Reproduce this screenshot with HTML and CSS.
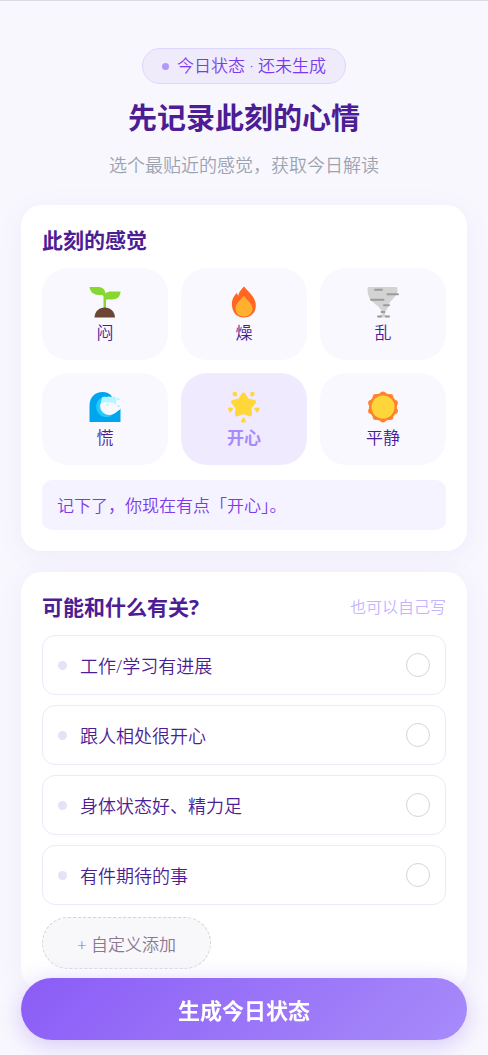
FILE: index.html
```html
<!DOCTYPE html>
<html lang="zh-CN">
<head>
    <meta charset="UTF-8">
    <meta name="viewport" content="width=device-width, initial-scale=1.0">
    <title>今日状态</title>
    <link rel="stylesheet" href="styles.css">
</head>
<body>
    <main class="page">
        <header class="header">
            <div class="badge"><span class="badge-dot"></span>今日状态 · 还未生成</div>
            <h1>先记录此刻的心情</h1>
            <p class="subtitle">选个最贴近的感觉，获取今日解读</p>
        </header>

        <!-- 心情选择 -->
        <section class="card">
            <h2>此刻的感觉</h2>
            <div class="mood-grid">
                <button type="button" class="mood">
                    <svg viewBox="0 0 32 32" aria-hidden="true">
                        <path d="M14.500 23V10.500C14.500 9.500 13.500 9 12 9H10C5 9 1 6 0.500 1H9C13.500 1 16 3.500 16.500 7.500C18 6 20 5.500 22 5.500H31.500C31.500 10.500 28 13.500 23 13.500H18C17.200 13.500 17 13.800 17 14.500V23Z" fill="#86d72f"/>
                        <path d="M5.500 31C6 25.500 10 21.500 15.700 21.500S25.500 25.500 26 31C26 31.400 25.800 31.500 25.500 31.500H6C5.700 31.500 5.500 31.400 5.500 31Z" fill="#6d4534"/>
                    </svg>
                    <span>闷</span>
                </button>
                <button type="button" class="mood">
                    <svg viewBox="0 0 32 32" aria-hidden="true">
                        <path d="M16 0.500C11.500 5 11 7 10.200 9.700C9.600 9 9.200 8 9 6.800C5 10.500 3.500 15 4 20C4.700 27 9.300 31.500 16 31.500S27.600 26.800 27.800 20C28 12 22.500 8 16 0.500Z" fill="#ff6723"/>
                        <path d="M16 9.500C14.500 13 7.500 16.500 7.500 22.500C7.500 27.500 11 30.500 16 30.500S24.500 27 24.500 22.500C24.500 17 18 14 16 9.500Z" fill="#ffb02e"/>
                    </svg>
                    <span>燥</span>
                </button>
                <button type="button" class="mood">
                    <svg viewBox="0 0 32 32" aria-hidden="true">
                        <path d="M1.500 1H29Q30.500 1 30.500 2.500V5C30.500 10 23.500 14 22 18C21 21 20.500 23 18.500 25C17.500 26.500 17.500 28 19 29L22 30.500Q23 31.500 21.500 31.500H12Q10.500 31 12 30L14.500 28.500C16 26.500 14.500 24.500 13 22.500C11 19.500 6 17 3 13C1 10 0.500 6 0.500 2.500Q0.500 1 1.500 1Z" fill="#d3d3d3"/>
                        <path d="M8 3.800H15M20.500 8.300H31M4 13.800H16.500M17 19.300H22M14.500 26H17.500M11 30.500H14M19 30.500H22" stroke="#9b9b9b" stroke-width="2" stroke-linecap="round" fill="none"/>
                    </svg>
                    <span>乱</span>
                </button>
                <button type="button" class="mood">
                    <svg viewBox="0 0 32 32" aria-hidden="true">
                        <path d="M0.500 30.500V15C0.500 6 6 1 13.500 1C17.500 1 20.500 2.500 22.500 5L24 10L13 13C11 18 14 23 19 23.500C24 24 28 20 31.500 17.500V30.500Q31.500 31 31 31H1Q0.500 31 0.500 30.500Z" fill="#00a6ed"/>
                        <path d="M14 6C8.500 8 6.500 13 7.500 18C9 24.500 15 27.500 21 25.500L25 22.500C17 25.500 11.500 21.500 12 15.500C12.200 13 13.500 11.500 15 10.500Z" fill="#26c9fc"/>
                        <path d="M13 10C16.500 9.500 22.500 10.500 27 10L31.500 9V18L28 20.500C24 25 17 25 13.500 21C10.500 17.500 10.500 13 13 10Z" fill="#faf8ff"/>
                        <path d="M13 6.500C15 5 17 6.500 18.500 5.700C20 4.800 22 6.300 23.500 5.800C25.500 5 28 6.500 27.300 8C28 10 26.500 12 24.500 11.500C23 12.500 21.500 11 20 11.300C18 12 16.500 10.800 15 11.500C12.500 12.500 11.500 10 12.500 9Z" fill="#b4f6ff"/>
                        <g fill="#b4f6ff"><circle cx="18.500" cy="14" r="1.300"/><circle cx="29.300" cy="8" r="1.300"/><circle cx="29.500" cy="15" r="1.300"/><circle cx="26" cy="12" r="1.300"/></g>
                    </svg>
                    <span>慌</span>
                </button>
                <button type="button" class="mood active" aria-pressed="true">
                    <svg viewBox="0 0 32 32" aria-hidden="true">
                        <g fill="#ffd738" stroke="#ffd738" stroke-linejoin="round">
                            <path d="M15.500 3.500L19.200 9.400L26 11L21.500 16.400L22 23.400L15.500 20.800L9 23.400L9.500 16.400L5 11L11.800 9.400Z" stroke-width="4"/>
                            <path d="M5.800 2L7.800 1.800L8 4.500L5.600 3.800ZM23.500 1.800L25.500 2.200L25.400 3.800L23.300 4.500ZM1 17.600L4 17.800L2.200 20.500ZM30.500 17.600L27.300 17.800L29.200 20.500ZM15.500 27.500L17 30.500H14Z" stroke-width="2"/>
                        </g>
                    </svg>
                    <span>开心</span>
                </button>
                <button type="button" class="mood">
                    <svg viewBox="0 0 32 32" aria-hidden="true">
                        <g fill="#ff822d">
                            <circle cx="16" cy="16" r="14"/>
                            <circle cx="16" cy="3.500" r="3"/><circle cx="23.300" cy="5.900" r="3"/><circle cx="27.900" cy="12.100" r="3"/><circle cx="27.900" cy="19.900" r="3"/><circle cx="23.300" cy="26.100" r="3"/>
                            <circle cx="16" cy="28.500" r="3"/><circle cx="8.700" cy="26.100" r="3"/><circle cx="4.100" cy="19.900" r="3"/><circle cx="4.100" cy="12.100" r="3"/><circle cx="8.700" cy="5.900" r="3"/>
                        </g>
                        <circle cx="16" cy="16" r="11.500" fill="#ffd53c"/>
                    </svg>
                    <span>平静</span>
                </button>
            </div>
            <p class="note">记下了，你现在有点「开心」。</p>
        </section>

        <!-- 原因选择 -->
        <section class="card">
            <div class="card-head">
                <h2>可能和什么有关?</h2>
                <span class="hint">也可以自己写</span>
            </div>
            <div class="options">
                <label class="option">
                    <span class="option-dot"></span>
                    <span class="option-text">工作/学习有进展</span>
                    <input type="checkbox" name="reason">
                </label>
                <label class="option">
                    <span class="option-dot"></span>
                    <span class="option-text">跟人相处很开心</span>
                    <input type="checkbox" name="reason">
                </label>
                <label class="option">
                    <span class="option-dot"></span>
                    <span class="option-text">身体状态好、精力足</span>
                    <input type="checkbox" name="reason">
                </label>
                <label class="option">
                    <span class="option-dot"></span>
                    <span class="option-text">有件期待的事</span>
                    <input type="checkbox" name="reason">
                </label>
            </div>
            <button type="button" class="custom">+ 自定义添加</button>
        </section>
    </main>

    <!-- 底部按钮 -->
    <div class="footer">
        <button type="button" class="submit">生成今日状态</button>
    </div>
</body>
</html>
```
FILE: styles.css
```css
* {
    box-sizing: border-box;
}
body {
    margin: 0;
    min-height: 100vh;
    border-top: 1px solid #dcd9e3;
    background: #f8f7fd;
    color: #4c1d95;
    font-family: "Open Sans", "Noto Sans CJK SC", sans-serif;
    font-weight: 350;
}
button {
    font-family: inherit;
    font-weight: inherit;
    color: inherit;
    cursor: pointer;
}
h1, h2, p {
    margin: 0;
}
.page {
    padding: 47px 21px 0;
}
.header {
    display: flex;
    flex-direction: column;
    align-items: center;
    margin-bottom: 25px;
}
.badge {
    display: flex;
    align-items: center;
    gap: 8px;
    padding: 5px 19px;
    border: 1px solid #ddd6fe;
    border-radius: 18px;
    background: #efebfb;
    color: #7c3aed;
    font-size: 17px;
    line-height: 24px;
}
.badge-dot {
    width: 7px;
    height: 7px;
    border-radius: 50%;
    background: #b497fb;
}
h1 {
    margin-top: 14px;
    font-size: 29px;
    line-height: 40px;
    font-weight: 700;
}
.subtitle {
    margin-top: 12px;
    color: #9ca3af;
    font-size: 18px;
    line-height: 30px;
}
.card {
    margin-bottom: 21px;
    padding: 20px 21px 21px;
    border-radius: 21px;
    background: #fff;
    box-shadow: 0 5px 26px rgba(109, 80, 220, 0.07);
}
.card:last-child {
    margin-bottom: 0;
}
h2 {
    font-size: 21px;
    line-height: 30px;
    font-weight: 700;
}
.mood-grid {
    display: grid;
    grid-template-columns: repeat(3, 1fr);
    gap: 13px;
    margin-top: 13px;
}
.mood {
    display: flex;
    flex-direction: column;
    align-items: center;
    gap: 3px;
    padding: 18px 0 15px;
    border: none;
    border-radius: 26px;
    background: #faf8ff;
    font-size: 17px;
    line-height: 24px;
}
.mood svg {
    width: 32px;
    height: 32px;
}
.mood.active {
    background: #f0eaff;
    color: #a78bfa;
    font-weight: 700;
}
.note {
    margin-top: 15px;
    padding: 11px 15px 9px;
    border-radius: 10px;
    background: #f5f3ff;
    color: #7c3aed;
    font-size: 17px;
    line-height: 30px;
}
.card-head {
    display: flex;
    align-items: center;
    justify-content: space-between;
}
.hint {
    color: #c4b5fd;
    font-size: 16px;
    line-height: 24px;
}
.options {
    display: flex;
    flex-direction: column;
    gap: 10px;
    margin-top: 13px;
}
.option {
    display: flex;
    align-items: center;
    gap: 13px;
    height: 60px;
    padding: 0 15px;
    border: 1px solid #ede9f8;
    border-radius: 13px;
    font-size: 18px;
}
.option-dot {
    width: 9px;
    height: 9px;
    border-radius: 50%;
    background: #e6e1f5;
}
.option-text {
    flex: 1;
}
.option input {
    appearance: none;
    width: 24px;
    height: 24px;
    margin: 0;
    border: 1px solid #d1d5db;
    border-radius: 50%;
}
.option input:checked {
    border-color: #8b5cf6;
    background: #8b5cf6;
}
.custom {
    display: block;
    height: 52px;
    margin-top: 12px;
    padding: 0 34px;
    border: 1px dashed #d1d5db;
    border-radius: 26px;
    background: #f8f7fa;
    color: #8b7891;
    font-size: 17px;
}
.footer {
    position: fixed;
    left: 0;
    right: 0;
    bottom: 0;
    padding: 20px 21px 15px;
    background: linear-gradient(to top, #f8f7fd 50%, rgba(248, 247, 253, 0));
}
.submit {
    display: block;
    width: 100%;
    height: 62px;
    border: none;
    border-radius: 31px;
    background: linear-gradient(135deg, #8b5cf6, #a78bfa);
    box-shadow: 0 5px 21px rgba(139, 92, 246, 0.3);
    color: #fff;
    font-size: 22px;
    font-weight: 700;
}
```
